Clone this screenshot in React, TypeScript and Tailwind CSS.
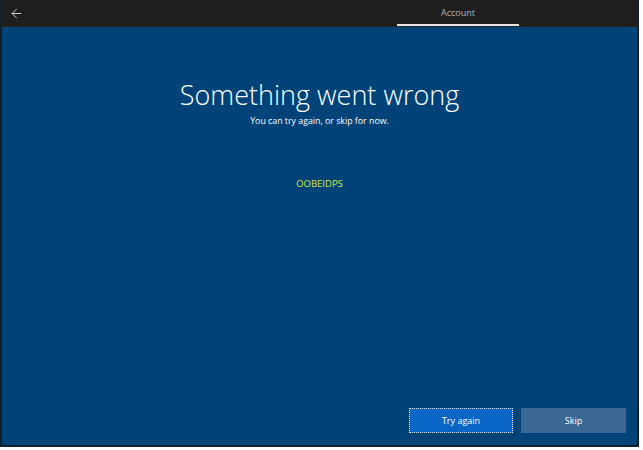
import { ArrowLeft } from 'lucide-react';

export default function App() {
  return (
    <div className="w-[643px] h-[450px] bg-white font-['Open_Sans',sans-serif]">
      <div className="w-[639px] h-[447px] border-l-2 border-r-2 border-b-2 border-[#15202b] flex flex-col">
        <div className="h-[27px] bg-[#1e1e1e] border-b border-[#2a221c] flex items-stretch">
          <div className="w-[28px] flex items-center justify-center text-[#d8d8d8]">
            <ArrowLeft className="w-[15px] h-[15px]" strokeWidth={1.5} />
          </div>
          <div className="flex-1" />
          <div className="w-[122px] mr-[118px] flex flex-col">
            <div className="flex-1 flex items-center justify-center text-[9px] text-[#b4b4b4] pt-[1px]">
              Account
            </div>
            <div className="h-[2px] bg-[#e2e8ee]" />
          </div>
        </div>
        <div className="flex-1 bg-[#004378] flex flex-col items-center">
          <h1 className="mt-[51px] text-[27px] font-light leading-[34px] text-white">
            Something went wrong
          </h1>
          <p className="mt-[3px] text-[8.8px] leading-[12px] text-white">
            You can try again, or skip for now.
          </p>
          <p className="mt-[50px] text-[9.5px] leading-[14px] text-[#d2ea3c]">OOBEIDPS</p>
          <div className="flex-1" />
          <div className="self-end flex gap-[8px] mr-[11px] mb-[12px]">
            <button className="w-[104px] h-[25px] bg-[#0a66c6] border border-dotted border-[#d8e6f4] text-[9px] text-white">
              Try again
            </button>
            <button className="w-[105px] h-[25px] bg-[#3a6892] text-[9px] text-white">
              Skip
            </button>
          </div>
        </div>
      </div>
    </div>
  );
}
